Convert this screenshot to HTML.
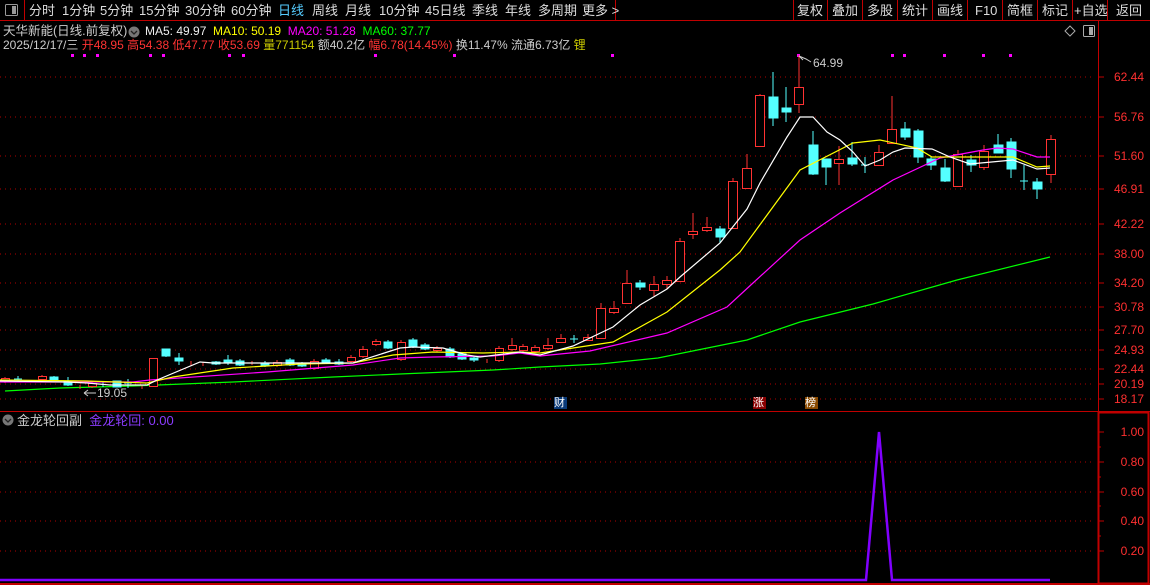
<!DOCTYPE html>
<html><head><meta charset="utf-8"><style>
html,body{margin:0;padding:0;background:#000;width:1150px;height:585px;overflow:hidden;font-family:"Liberation Sans","Noto Sans CJK SC",sans-serif;}
.t{position:absolute;white-space:nowrap;font-size:13px;line-height:15px;}
</style></head><body>
<svg width="1150" height="585" style="position:absolute;left:0;top:0" xmlns="http://www.w3.org/2000/svg">
<line x1="0" y1="20.5" x2="1150" y2="20.5" stroke="#c00000"/>
<line x1="24.5" y1="0" x2="24.5" y2="20" stroke="#c00000"/>
<line x1="615.5" y1="0" x2="615.5" y2="20" stroke="#c00000"/>
<g stroke="#c00000">
<line x1="793.5" y1="0" x2="793.5" y2="20"/><line x1="827.5" y1="0" x2="827.5" y2="20"/><line x1="862.5" y1="0" x2="862.5" y2="20"/><line x1="897.5" y1="0" x2="897.5" y2="20"/><line x1="932.5" y1="0" x2="932.5" y2="20"/><line x1="967.5" y1="0" x2="967.5" y2="20"/><line x1="1002.5" y1="0" x2="1002.5" y2="20"/><line x1="1037.5" y1="0" x2="1037.5" y2="20"/><line x1="1072.5" y1="0" x2="1072.5" y2="20"/><line x1="1107.5" y1="0" x2="1107.5" y2="20"/>
</g>
<rect x="5.5" y="4.5" width="12" height="11" fill="none" stroke="#999" rx="1"/><rect x="12" y="6" width="4" height="8" fill="#999"/>
<line x1="1098.5" y1="20" x2="1098.5" y2="585" stroke="#c00000"/>
<line x1="0" y1="411.5" x2="1150" y2="411.5" stroke="#c00000"/>
<rect x="1098.5" y="412.5" width="50" height="171" fill="none" stroke="#c00000" stroke-width="2"/>
<line x1="0" y1="584" x2="1150" y2="584" stroke="#c00000" stroke-width="2"/>
<g stroke="#b00000" stroke-dasharray="1,4">
<line x1="0" y1="77" x2="1095" y2="77"/><line x1="0" y1="117" x2="1095" y2="117"/><line x1="0" y1="156" x2="1095" y2="156"/><line x1="0" y1="189" x2="1095" y2="189"/><line x1="0" y1="224" x2="1095" y2="224"/><line x1="0" y1="254" x2="1095" y2="254"/><line x1="0" y1="283" x2="1095" y2="283"/><line x1="0" y1="307" x2="1095" y2="307"/><line x1="0" y1="330" x2="1095" y2="330"/><line x1="0" y1="350" x2="1095" y2="350"/><line x1="0" y1="369" x2="1095" y2="369"/><line x1="0" y1="384" x2="1095" y2="384"/><line x1="0" y1="399" x2="1095" y2="399"/>
<line x1="0" y1="462" x2="1095" y2="462"/><line x1="0" y1="492" x2="1095" y2="492"/><line x1="0" y1="521" x2="1095" y2="521"/><line x1="0" y1="551" x2="1095" y2="551"/>
</g>
<g stroke="#c00000">
<line x1="1098" y1="77" x2="1104" y2="77"/><line x1="1098" y1="117" x2="1104" y2="117"/><line x1="1098" y1="156" x2="1104" y2="156"/><line x1="1098" y1="189" x2="1104" y2="189"/><line x1="1098" y1="224" x2="1104" y2="224"/><line x1="1098" y1="254" x2="1104" y2="254"/><line x1="1098" y1="283" x2="1104" y2="283"/><line x1="1098" y1="307" x2="1104" y2="307"/><line x1="1098" y1="330" x2="1104" y2="330"/><line x1="1098" y1="350" x2="1104" y2="350"/><line x1="1098" y1="369" x2="1104" y2="369"/><line x1="1098" y1="384" x2="1104" y2="384"/><line x1="1098" y1="399" x2="1104" y2="399"/>
<line x1="1099" y1="432" x2="1104" y2="432"/><line x1="1099" y1="462" x2="1104" y2="462"/><line x1="1099" y1="492" x2="1104" y2="492"/><line x1="1099" y1="521" x2="1104" y2="521"/><line x1="1099" y1="551" x2="1104" y2="551"/>
<line x1="1099" y1="447" x2="1101" y2="447"/><line x1="1099" y1="477" x2="1101" y2="477"/><line x1="1099" y1="506" x2="1101" y2="506"/><line x1="1099" y1="536" x2="1101" y2="536"/>
</g>
<g fill="#ff00ff">
<rect x="71" y="54" width="3" height="3"/><rect x="83" y="54" width="3" height="3"/><rect x="96" y="54" width="3" height="3"/><rect x="149" y="54" width="3" height="3"/><rect x="162" y="54" width="3" height="3"/><rect x="228" y="54" width="3" height="3"/><rect x="242" y="54" width="3" height="3"/><rect x="374" y="54" width="3" height="3"/><rect x="453" y="54" width="3" height="3"/><rect x="611" y="54" width="3" height="3"/><rect x="797" y="54" width="3" height="3"/><rect x="891" y="54" width="3" height="3"/><rect x="903" y="54" width="3" height="3"/><rect x="943" y="54" width="3" height="3"/><rect x="982" y="54" width="3" height="3"/><rect x="1009" y="54" width="3" height="3"/>
</g>
<polyline fill="none" stroke="#00ff00" stroke-width="1.2" points="5,391 60,388 133,386 233,382 333,377 400,374 493,370 540,367 600,364 658,358 747,340 800,322 873,304 957,280 1050,257"/>
<g stroke="#ff3232" fill="#000" stroke-width="1">
<path d="M5 377V383M18 378V381M42 375V381M80 385V389M92 382V388M142 385V389M191 361V366M203 362V366M252 361V365M277 360V367M314 359V370M351 355V363M363 346V358M376 339V346M401 340V361M437 346V352M487 359V363M499 346V362M512 338V351M523 344V352M535 345V353M548 338V350M561 334V343M588 334V341M601 303V339M614 301V314M627 270V304M654 276V296M667 276V289M680 238V282M693 213V239M707 217V232M733 178V229M747 154V189M760 94V147M799 55V113M839 146V185M879 145V166M892 96V144M958 150V187M984 145V170M1051 135V183"/>
<rect x="1.5" y="378.5" width="8" height="3"/><rect x="38.5" y="376.5" width="8" height="3"/><rect x="88.5" y="383.5" width="8" height="3"/><rect x="149.5" y="358.5" width="8" height="28"/><rect x="273.5" y="362.5" width="8" height="3"/><rect x="310.5" y="361.5" width="8" height="7"/><rect x="347.5" y="357.5" width="8" height="4"/><rect x="359.5" y="349.5" width="8" height="7"/><rect x="372.5" y="341.5" width="8" height="3"/><rect x="397.5" y="342.5" width="8" height="17"/><rect x="433.5" y="348.5" width="8" height="2"/><rect x="495.5" y="348.5" width="8" height="12"/><rect x="508.5" y="345.5" width="8" height="4"/><rect x="519.5" y="346.5" width="8" height="4"/><rect x="531.5" y="347.5" width="8" height="4"/>
<rect x="543.5" y="345.5" width="9" height="3"/><rect x="556.5" y="338.5" width="9" height="4"/><rect x="583.5" y="337.5" width="9" height="3"/><rect x="596.5" y="308.5" width="9" height="30"/><rect x="609.5" y="308.5" width="9" height="4"/><rect x="622.5" y="283.5" width="9" height="20"/><rect x="649.5" y="284.5" width="9" height="6"/><rect x="662.5" y="280.5" width="9" height="4"/><rect x="675.5" y="241.5" width="9" height="40"/><rect x="688.5" y="231.5" width="9" height="3"/><rect x="702.5" y="227.5" width="9" height="3"/><rect x="728.5" y="181.5" width="9" height="47"/><rect x="742.5" y="168.5" width="9" height="20"/><rect x="755.5" y="95.5" width="9" height="51"/><rect x="794.5" y="87.5" width="9" height="17"/><rect x="834.5" y="159.5" width="9" height="4"/><rect x="874.5" y="152.5" width="9" height="13"/><rect x="887.5" y="129.5" width="9" height="14"/><rect x="953.5" y="154.5" width="9" height="32"/><rect x="979.5" y="151.5" width="9" height="16"/><rect x="1046.5" y="139.5" width="9" height="35"/>
</g>
<g stroke="#54ffff" stroke-width="1" fill="#54ffff">
<path d="M14 379H22M18 376V382M54 376V381M68 377V386M103 381V387M128 379V388M124 383H132M166 349V357M179 353V365M216 361V365M228 355V365M240 359V366M265 361V367M290 358V366M302 362V367M326 358V363M339 359V365M388 340V349M413 338V348M425 343V350M450 347V358M462 352V360M474 356V362M570 339H578M574 335V343M640 280V290M720 226V243M773 72V126M786 87V122M813 131V175M826 159V185M852 142V166M861 165H869M865 157V173M905 122V140M918 129V163M931 156V170M945 159V182M971 155V172M998 134V153M1011 138V178M1020 181H1028M1024 165V190M1037 178V199"/>
<rect x="50" y="377" width="8" height="3"/><rect x="64" y="381" width="8" height="4"/><rect x="113" y="381" width="8" height="6"/><rect x="162" y="349" width="8" height="7"/><rect x="175" y="358" width="8" height="3"/><rect x="212" y="362" width="8" height="2"/><rect x="224" y="360" width="8" height="2"/><rect x="236" y="361" width="8" height="4"/><rect x="261" y="363" width="8" height="3"/><rect x="286" y="360" width="8" height="5"/><rect x="298" y="364" width="8" height="2"/><rect x="322" y="360" width="8" height="2"/><rect x="335" y="362" width="8" height="2"/><rect x="384" y="342" width="8" height="6"/><rect x="409" y="340" width="8" height="7"/><rect x="421" y="345" width="8" height="4"/><rect x="446" y="349" width="8" height="8"/><rect x="458" y="354" width="8" height="5"/><rect x="470" y="358" width="8" height="2"/>
<rect x="636" y="283" width="9" height="4"/><rect x="716" y="229" width="9" height="8"/><rect x="769" y="97" width="9" height="21"/><rect x="782" y="108" width="9" height="4"/><rect x="809" y="145" width="9" height="29"/><rect x="822" y="159" width="9" height="8"/><rect x="848" y="158" width="9" height="6"/><rect x="901" y="129" width="9" height="8"/><rect x="914" y="131" width="9" height="26"/><rect x="927" y="159" width="9" height="6"/><rect x="941" y="168" width="9" height="13"/><rect x="967" y="160" width="9" height="5"/><rect x="994" y="145" width="9" height="8"/><rect x="1007" y="142" width="9" height="27"/><rect x="1033" y="182" width="9" height="7"/>
</g>
<polyline fill="none" stroke="#ff00ff" stroke-width="1.2" points="0,382 133,382 150,380 267,372 353,365 400,358 433,357 493,356 520,353 540,356 590,351 667,333 727,307 753,283 800,240 840,213 893,180 940,158 983,150 997,148 1013,149 1037,157 1050,157"/>
<polyline fill="none" stroke="#ffff00" stroke-width="1.2" points="0,380 87,381 147,383 173,377 233,368 300,364 353,363 393,355 433,352 483,353 520,352 540,353 613,342 667,312 720,270 740,252 800,170 853,143 880,140 917,148 932,157 983,157 1013,157 1037,167 1050,166"/>
<polyline fill="none" stroke="#ffffff" stroke-width="1.2" points="0,381 67,382 87,383 110,385 147,385 157,380 200,362 213,363 267,363 353,363 400,348 413,347 443,348 467,355 480,357 520,352 540,355 573,346 613,327 640,305 667,289 680,277 720,243 747,209 760,183 787,137 800,117 813,117 827,132 840,140 853,152 865,166 880,160 893,152 905,148 932,149 950,157 970,164 1013,160 1037,169 1050,168"/>
<path d="M799 56 L803 60 M799 56 L806 59 L811 62" stroke="#ccc" fill="none"/>
<path d="M84 393 L88 390 M84 393 L88 396 M84 393 L96 393" stroke="#ccc" fill="none"/>
<rect x="554" y="397" width="13" height="12" fill="#0a3a78"/>
<rect x="753" y="397" width="13" height="12" fill="#8a0000"/>
<rect x="805" y="397" width="13" height="12" fill="#8a4a00"/>
<path d="M1070 26 L1075 31 L1070 36 L1065 31 Z" fill="none" stroke="#aaa"/>
<rect x="1083.5" y="25.5" width="11" height="11" fill="none" stroke="#aaa" rx="1"/><rect x="1089" y="27" width="4" height="8" fill="#aaa"/>
<circle cx="134" cy="32" r="5.5" fill="#777"/><path d="M131 31 L134 34 L137 31" stroke="#222" fill="none" stroke-width="1.3"/>
<circle cx="8" cy="420" r="5.5" fill="#777"/><path d="M5 419 L8 422 L11 419" stroke="#222" fill="none" stroke-width="1.3"/>
<polyline fill="none" stroke="#8000ff" stroke-width="2.5" points="0,580 866,580 879,432 892,580 1050,580"/>
</svg>
<div class="t" style="left:29px;top:3px;color:#ddd">分时</div>
<div class="t" style="left:62px;top:3px;color:#ddd">1分钟</div>
<div class="t" style="left:100px;top:3px;color:#ddd">5分钟</div>
<div class="t" style="left:139px;top:3px;color:#ddd">15分钟</div>
<div class="t" style="left:185px;top:3px;color:#ddd">30分钟</div>
<div class="t" style="left:231px;top:3px;color:#ddd">60分钟</div>
<div class="t" style="left:278px;top:3px;color:#5cf">日线</div>
<div class="t" style="left:312px;top:3px;color:#ddd">周线</div>
<div class="t" style="left:345px;top:3px;color:#ddd">月线</div>
<div class="t" style="left:379px;top:3px;color:#ddd">10分钟</div>
<div class="t" style="left:425px;top:3px;color:#ddd">45日线</div>
<div class="t" style="left:472px;top:3px;color:#ddd">季线</div>
<div class="t" style="left:505px;top:3px;color:#ddd">年线</div>
<div class="t" style="left:538px;top:3px;color:#ddd">多周期</div>
<div class="t" style="left:582px;top:3px;color:#ddd">更多 &gt;</div>
<div class="t" style="left:797px;top:3px;color:#ddd">复权</div>
<div class="t" style="left:832px;top:3px;color:#ddd">叠加</div>
<div class="t" style="left:867px;top:3px;color:#ddd">多股</div>
<div class="t" style="left:902px;top:3px;color:#ddd">统计</div>
<div class="t" style="left:937px;top:3px;color:#ddd">画线</div>
<div class="t" style="left:975px;top:3px;color:#ddd">F10</div>
<div class="t" style="left:1007px;top:3px;color:#ddd">简框</div>
<div class="t" style="left:1042px;top:3px;color:#ddd">标记</div>
<div class="t" style="left:1074px;top:3px;color:#ddd">+自选</div>
<div class="t" style="left:1116px;top:3px;color:#ddd">返回</div>
<div class="t" style="left:3px;top:24px;color:#ccc;font-size:12.5px">天华新能(日线.前复权)</div>
<div class="t" style="left:145px;top:24px;font-size:12px"><span style="color:#eee">MA5: 49.97</span> <span style="color:#ff0">&nbsp;MA10: 50.19</span> <span style="color:#f0f">&nbsp;MA20: 51.28</span> <span style="color:#0f0">&nbsp;MA60: 37.77</span></div>
<div class="t" style="left:3px;top:38px;font-size:12px;color:#ccc">2025/12/17/三 <span style="color:#f33">开48.95</span> <span style="color:#f33">高54.38</span> <span style="color:#f33">低47.77</span> <span style="color:#f33">收53.69</span> <span style="color:#cc0">量771154</span> 额40.2亿 <span style="color:#f33">幅6.78(14.45%)</span> 换11.47% 流通6.73亿 <span style="color:#cc0">锂</span></div>
<div class="t" style="left:813px;top:56px;color:#ccc;font-size:12px">64.99</div>
<div class="t" style="left:97px;top:386px;color:#ccc;font-size:12px">19.05</div>
<div class="t" style="left:554px;top:396px;color:#fff;font-size:11px">财</div>
<div class="t" style="left:753px;top:396px;color:#fff;font-size:11px">涨</div>
<div class="t" style="left:805px;top:396px;color:#fff;font-size:11px">榜</div>
<div class="t" style="left:17px;top:413px;color:#ccc">金龙轮回副 <span style="color:#8c3cff">&nbsp;金龙轮回: 0.00</span></div>
<div style="position:absolute;left:1100px;width:44px;text-align:right;color:#ff3030;font-size:12px;line-height:14px">
<div style="position:absolute;right:0;top:70px">62.44</div><div style="position:absolute;right:0;top:110px">56.76</div><div style="position:absolute;right:0;top:149px">51.60</div><div style="position:absolute;right:0;top:182px">46.91</div><div style="position:absolute;right:0;top:217px">42.22</div><div style="position:absolute;right:0;top:247px">38.00</div><div style="position:absolute;right:0;top:276px">34.20</div><div style="position:absolute;right:0;top:300px">30.78</div><div style="position:absolute;right:0;top:323px">27.70</div><div style="position:absolute;right:0;top:343px">24.93</div><div style="position:absolute;right:0;top:362px">22.44</div><div style="position:absolute;right:0;top:377px">20.19</div><div style="position:absolute;right:0;top:392px">18.17</div>
<div style="position:absolute;right:0;top:425px">1.00</div><div style="position:absolute;right:0;top:455px">0.80</div><div style="position:absolute;right:0;top:485px">0.60</div><div style="position:absolute;right:0;top:514px">0.40</div><div style="position:absolute;right:0;top:544px">0.20</div>
</div>
</body></html>
